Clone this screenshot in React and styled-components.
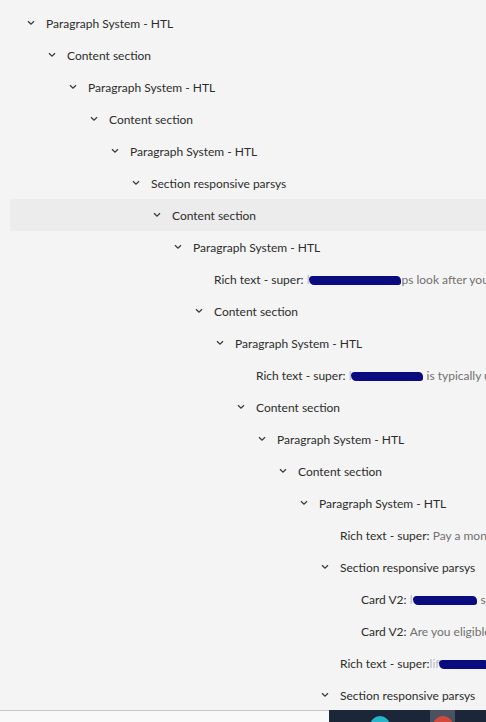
import React from 'react'
import styled, { createGlobalStyle } from 'styled-components'

const GlobalStyle = createGlobalStyle`
  html, body {
    margin: 0;
    padding: 0;
    background: #f4f4f4;
  }
  body {
    font-family: Lato, "Open Sans", "Liberation Sans", sans-serif;
  }
`

const Page = styled.div`
  width: 486px;
  height: 722px;
  overflow: hidden;
  display: flex;
  flex-direction: column;
  background: #f4f4f4;
`

const Tree = styled.div`
  flex: 1;
  padding-top: 7px;
  overflow: hidden;
`

const Row = styled.div`
  height: 32px;
  display: flex;
  align-items: center;
  margin-left: 10px;
  padding-left: ${props => 36 + props.level * 21}px;
  white-space: nowrap;
  overflow: hidden;
  background: ${props => (props.selected ? '#ececec' : 'transparent')};
  position: relative;
  font-size: 12px;
  color: #2c2c2c;
`

const Chevron = styled.svg`
  position: absolute;
  left: ${props => 17 + props.level * 21}px;
  top: 13px;
  width: 8px;
  height: 6px;
`

const Label = styled.span`
  color: #2c2c2c;
  flex: none;
`

const Value = styled.span`
  color: #707070;
`

const Redact = styled.span`
  display: inline-block;
  flex: none;
  width: ${props => props.w}px;
  height: 9px;
  margin-top: 2px;
  background: #0b0b80;
  border-radius: 4px 5px 3px 6px;
  margin-left: ${props => props.ml || 0}px;
  margin-right: ${props => props.mr || 0}px;
`

const Faint = styled.span`
  color: #b9b9c9;
  flex: none;
`

const Bottom = styled.div`
  height: 11px;
  display: flex;
  border-top: 1px solid #c9c9c9;
  flex: none;
`

const BottomLight = styled.div`
  flex: 1;
  background: #f9f9f9;
`

const Taskbar = styled.div`
  width: 157px;
  background: #1b2638;
  display: flex;
  overflow: hidden;
  margin-top: -1px;
`

const TaskSlot = styled.div`
  width: ${props => props.w}px;
  background: ${props => props.bg || 'transparent'};
  display: flex;
  justify-content: center;
  flex: none;
`

const Dot = styled.div`
  width: 20px;
  height: 20px;
  border-radius: 50%;
  margin-top: 6px;
  background: ${props => props.color};
`

const ChevronIcon = ({ level }) => (
  <Chevron level={level} viewBox="0 0 8 6">
    <path d="M1 1.2 L4 4.2 L7 1.2" fill="none" stroke="#3a3a3a" strokeWidth="1.3" />
  </Chevron>
)

const Node = ({ level, open = true, selected, children }) => (
  <Row level={level} selected={selected}>
    {open ? <ChevronIcon level={level} /> : null}
    {children}
  </Row>
)

export default function App() {
  return (
    <Page>
      <GlobalStyle />
      <Tree>
        <Node level={0}><Label>Paragraph System - HTL</Label></Node>
        <Node level={1}><Label>Content section</Label></Node>
        <Node level={2}><Label>Paragraph System - HTL</Label></Node>
        <Node level={3}><Label>Content section</Label></Node>
        <Node level={4}><Label>Paragraph System - HTL</Label></Node>
        <Node level={5}><Label>Section responsive parsys</Label></Node>
        <Node level={6} selected><Label>Content section</Label></Node>
        <Node level={7}><Label>Paragraph System - HTL</Label></Node>
        <Node level={8} open={false}>
          <Label>Rich text - super:&nbsp;</Label>
          <Faint>l</Faint><Redact w={92} />
          <Value>ps look after you</Value>
        </Node>
        <Node level={8}><Label>Content section</Label></Node>
        <Node level={9}><Label>Paragraph System - HTL</Label></Node>
        <Node level={10} open={false}>
          <Label>Rich text - super:&nbsp;</Label>
          <Faint>l</Faint><Redact w={72} />
          <Value>&nbsp;is typically used</Value>
        </Node>
        <Node level={10}><Label>Content section</Label></Node>
        <Node level={11}><Label>Paragraph System - HTL</Label></Node>
        <Node level={12}><Label>Content section</Label></Node>
        <Node level={13}><Label>Paragraph System - HTL</Label></Node>
        <Node level={14} open={false}>
          <Label>Rich text - super:&nbsp;</Label>
          <Value>Pay a monthly premium</Value>
        </Node>
        <Node level={14}><Label>Section responsive parsys</Label></Node>
        <Node level={15} open={false}>
          <Label>Card V2:&nbsp;</Label>
          <Faint>l</Faint><Redact w={64} ml={1} mr={3} />
          <Value>s</Value>
        </Node>
        <Node level={15} open={false}>
          <Label>Card V2:&nbsp;</Label>
          <Value>Are you eligible for cover</Value>
        </Node>
        <Node level={14} open={false}>
          <Label>Rich text - super:</Label>
          <Faint>lif</Faint><Redact w={50} />
        </Node>
        <Node level={14}><Label>Section responsive parsys</Label></Node>
      </Tree>
      <Bottom>
        <BottomLight />
        <Taskbar>
          <TaskSlot w={101}>
            <Dot color="#27b6c9" />
          </TaskSlot>
          <TaskSlot w={25} bg="#4a5262">
            <Dot color="#d5483c" />
          </TaskSlot>
          <TaskSlot w={31} />
        </Taskbar>
      </Bottom>
    </Page>
  )
}
